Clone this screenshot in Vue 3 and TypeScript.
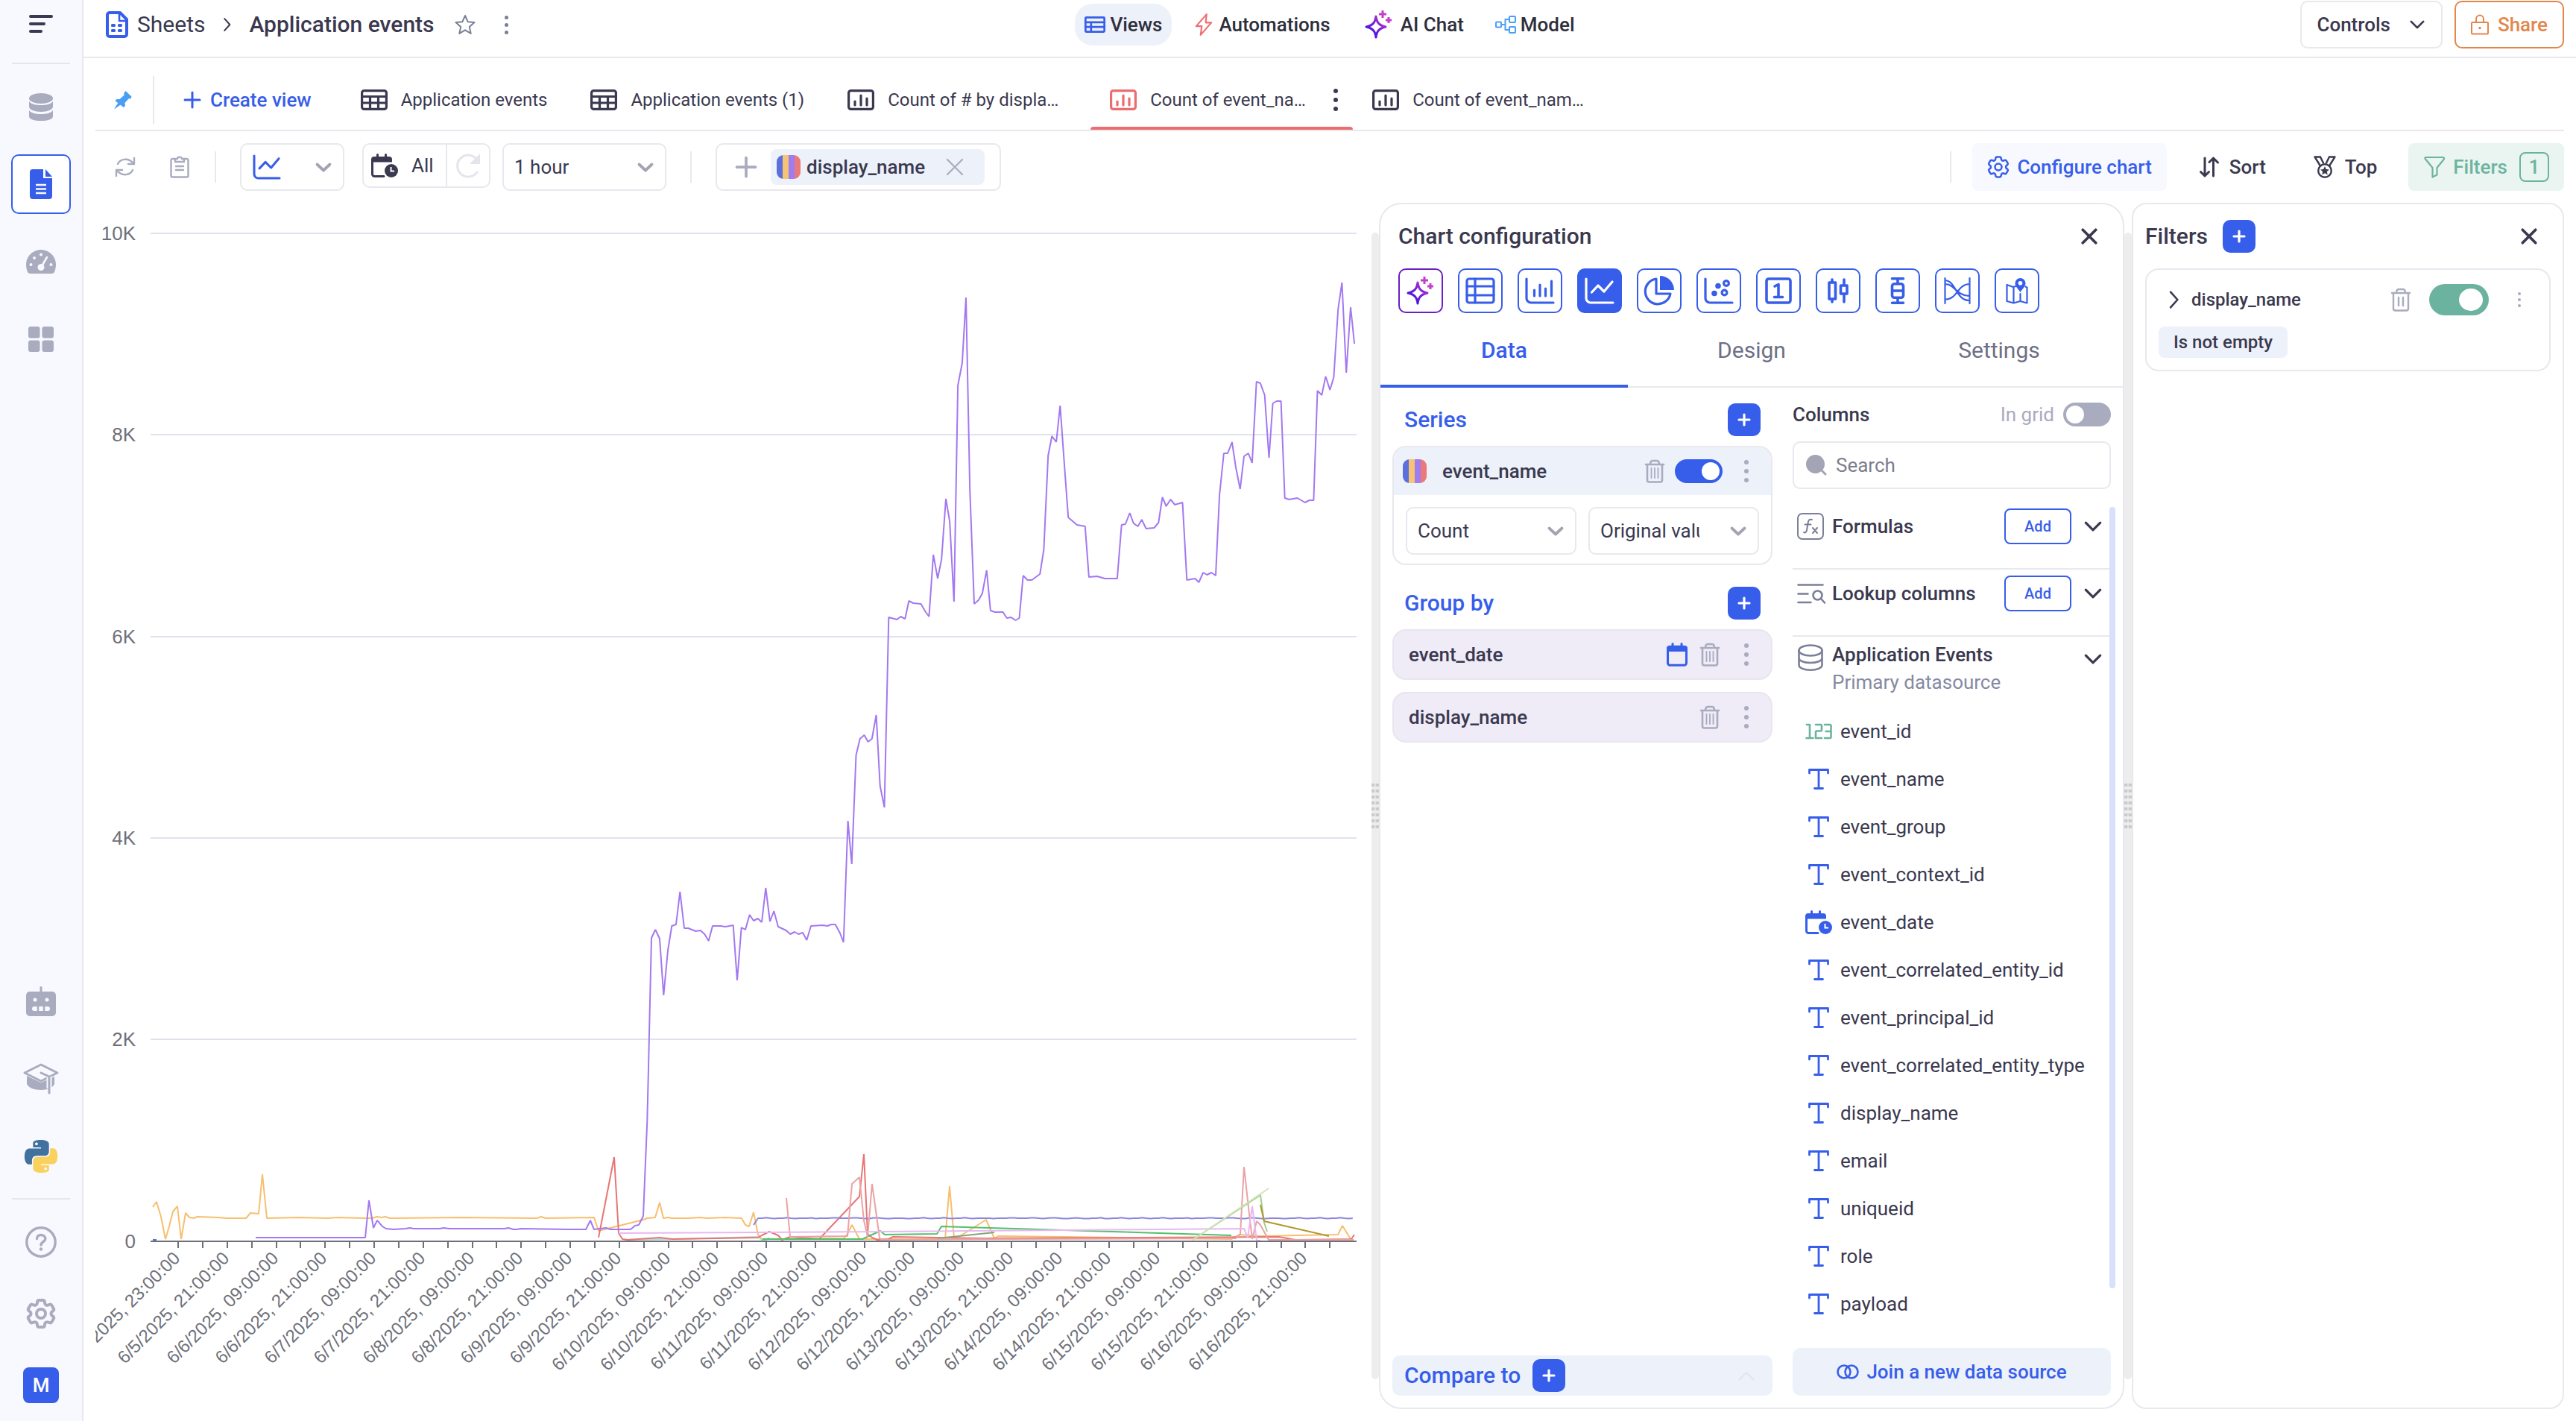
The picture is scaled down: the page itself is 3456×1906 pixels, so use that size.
<script setup lang="ts">
import { h, ref, type FunctionalComponent } from 'vue'

interface Glyph {
  box: string
  body: string
}

const gearPath =
  'M9.594 3.94c.09-.542.56-.94 1.11-.94h2.593c.55 0 1.02.398 1.11.94l.213 1.281c.063.374.313.686.645.87.074.04.147.083.22.127.325.196.72.257 1.075.124l1.217-.456a1.125 1.125 0 0 1 1.37.49l1.296 2.247a1.125 1.125 0 0 1-.26 1.431l-1.003.827c-.293.241-.438.613-.43.992a7.723 7.723 0 0 1 0 .255c-.008.378.137.75.43.991l1.004.827c.424.35.534.955.26 1.43l-1.298 2.247a1.125 1.125 0 0 1-1.369.491l-1.217-.456c-.355-.133-.75-.072-1.076.124a6.47 6.47 0 0 1-.22.128c-.331.183-.581.495-.644.869l-.213 1.281c-.09.543-.56.94-1.11.94h-2.594c-.55 0-1.019-.398-1.11-.94l-.213-1.281c-.062-.374-.312-.686-.644-.87a6.52 6.52 0 0 1-.22-.127c-.325-.196-.72-.257-1.076-.124l-1.217.456a1.125 1.125 0 0 1-1.369-.49l-1.297-2.247a1.125 1.125 0 0 1 .26-1.431l1.004-.827c.292-.24.437-.613.43-.991a6.932 6.932 0 0 1 0-.255c.007-.38-.138-.751-.43-.992l-1.004-.827a1.125 1.125 0 0 1-.26-1.43l1.297-2.247a1.125 1.125 0 0 1 1.37-.491l1.216.456c.356.133.751.072 1.076-.124.072-.044.146-.086.22-.128.332-.183.582-.495.644-.869l.214-1.28Z'

const line = (width: number, inner: string) =>
  `<g fill="none" stroke="currentColor" stroke-width="${width}" stroke-linecap="round" stroke-linejoin="round">${inner}</g>`
const solid = (inner: string) => `<g fill="currentColor">${inner}</g>`

const sparkle =
  '<defs><linearGradient id="ai" x1="0" y1="1" x2="1" y2="0"><stop offset="0.1" stop-color="#3a12e0"/><stop offset="0.6" stop-color="#7d22d8"/><stop offset="1" stop-color="#d63fc4"/></linearGradient></defs><g fill="none" stroke-width="3" stroke-linejoin="round"><path stroke="url(#ai)" d="M15 8c1 8 4 12 13 14-9 2-12 6-13 14-1-8-4-12-13-14 9-2 12-6 13-14z"/><path stroke="#c23fcb" d="M24 0v10M19 5h10M32 9v8M28 13h8"/></g>'

const glyphs: Record<string, Glyph> = {
  menu: { box: '0 0 32 24', body: solid('<rect width="32" height="4" rx="2"/><rect y="10" width="22" height="4" rx="2"/><rect y="20" width="18" height="4" rx="2"/>') },
  db: { box: '0 0 32 37', body: solid('<ellipse cx="16" cy="7" rx="16" ry="7"/><path d="M0 11c3 4 9 5 16 5s13-1 16-5v7c0 4-7 7-16 7S0 22 0 18zM0 23c3 4 9 5 16 5s13-1 16-5v8c0 4-7 6-16 6S0 35 0 31z"/>') },
  doc: { box: '0 0 30 40', body: solid('<path d="M4 0h14v12h12v24a4 4 0 0 1-4 4H4a4 4 0 0 1-4-4V4a4 4 0 0 1 4-4zM21 0l9 10h-9z"/>') + '<path stroke="#f8f9fe" stroke-width="2.6" d="M8 21h14M8 26.500h14M8 32h14"/>' },
  gauge: { box: '0 0 40 32', body: solid('<path d="M20 0C9 0 0 9 0 20c0 4 1 7 2 10 1 1 2 2 4 2h28c2 0 3-1 4-2 1-3 2-6 2-10C40 9 31 0 20 0z"/>') + '<g fill="#f8f9fe"><circle cx="20" cy="6.500" r="2"/><circle cx="11" cy="11" r="2"/><circle cx="6.500" cy="20" r="2"/><circle cx="33.500" cy="20" r="2"/><circle cx="20" cy="23.500" r="4.500"/></g><path stroke="#f8f9fe" stroke-width="2.600" stroke-linecap="round" d="M21 22l7-12"/>' },
  grid: { box: '0 0 34 34', body: solid('<rect width="15.500" height="15.500" rx="3"/><rect x="18.500" width="15.500" height="15.500" rx="3"/><rect y="18.500" width="15.500" height="15.500" rx="3"/><rect x="18.500" y="18.500" width="15.500" height="15.500" rx="3"/>') },
  robot: { box: '0 0 40 40', body: solid('<rect y="7" width="40" height="33" rx="5"/><rect x="18.500" width="3" height="9" rx="1.500"/>') + '<g fill="#f8f9fe"><circle cx="12" cy="18" r="2.500"/><circle cx="28" cy="18" r="2.500"/><rect x="8" y="27" width="24" height="6" rx="3"/></g><path stroke="#a9abbf" stroke-width="2.500" d="M16 26v8M24 26v8"/>' },
  cap: { box: '0 0 48 42', body: solid('<path d="M5 17l19 9 18-8v10c-2 5-9 8-18 8S7 33 5 28z"/>') + '<path fill="#f8f9fe" stroke="#a9abbf" stroke-width="3" stroke-linejoin="round" d="M24 2l22 11-22 11L2 13z"/><path fill="none" stroke="#f8f9fe" stroke-width="7" d="M35 18v16"/>' + line(3, '<path d="M24 13l11 5v22"/>') },
  python: { box: '0 0 24 24', body: '<path fill="#41719f" d="M14.25.18l.9.2.73.26.59.3.45.32.34.34.25.34.16.33.1.3.04.26.02.2-.01.13V8.5l-.05.63-.13.55-.21.46-.26.38-.3.31-.33.25-.35.19-.35.14-.33.1-.3.07-.26.04-.21.02H8.77l-.69.05-.59.14-.5.22-.41.27-.33.32-.27.35-.2.36-.15.37-.1.35-.07.32-.04.27-.02.21v3.06H3.17l-.21-.03-.28-.07-.32-.12-.35-.18-.36-.26-.36-.36-.35-.46-.32-.59-.28-.73-.21-.88-.14-1.05-.05-1.23.06-1.22.16-1.04.24-.87.32-.71.36-.57.4-.44.42-.33.42-.24.4-.16.36-.1.32-.05.24-.01h.16l.06.01h8.16v-.83H6.18l-.01-2.75-.02-.37.05-.34.11-.31.17-.28.25-.26.31-.23.38-.2.44-.18.51-.15.58-.12.64-.1.71-.06.77-.04.84-.02 1.27.05zm-6.3 1.98l-.23.33-.08.41.08.41.23.34.33.22.41.09.41-.09.33-.22.23-.34.08-.41-.08-.41-.23-.33-.33-.22-.41-.09-.41.09z"/><path fill="#f9d15c" d="M21.1 6.11l.28.06.32.12.35.18.36.27.36.35.35.47.32.59.28.73.21.88.14 1.04.05 1.23-.06 1.23-.16 1.04-.24.86-.32.71-.36.57-.4.45-.42.33-.42.24-.4.16-.36.09-.32.05-.24.02-.16-.01h-8.22v.82h5.84l.01 2.76.02.36-.05.34-.11.31-.17.29-.25.25-.31.24-.38.2-.44.17-.51.15-.58.13-.64.09-.71.07-.77.04-.84.01-1.27-.04-1.07-.14-.9-.2-.73-.25-.59-.3-.45-.33-.34-.34-.25-.34-.16-.33-.1-.3-.04-.25-.02-.2.01-.13v-5.34l.05-.64.13-.54.21-.46.26-.38.3-.32.33-.24.35-.2.35-.14.33-.1.3-.06.26-.04.21-.02.13-.01h5.84l.69-.05.59-.14.5-.21.41-.28.33-.32.27-.35.2-.36.15-.36.1-.35.07-.32.04-.28.02-.21V6.07h2.09l.14.01zm-6.47 14.25l-.23.33-.08.41.08.41.23.33.33.23.41.08.41-.08.33-.23.23-.33.08-.41-.08-.41-.23-.33-.33-.23-.41-.08-.41.08z"/>' },
  help: { box: '0 0 42 42', body: line(3.4, '<circle cx="21" cy="21" r="19.200"/><path d="M15.500 16.500c0-3.500 2.500-5 5.500-5s5.800 1.800 5.800 5c0 4.500-5.800 4-5.800 8.500"/>') + solid('<circle cx="21" cy="30.500" r="2.200"/>') },
  gear: { box: '2 2 20 20', body: line(2, `<path d="${gearPath}"/><circle cx="12" cy="12" r="3"/>`) },
  gearThin: { box: '2 2 20 20', body: line(1.7, `<path d="${gearPath}"/><circle cx="12" cy="12" r="3"/>`) },
  sheet: { box: '0 0 30 36', body: line(4, '<path d="M5 2h14l9 9v20a3 3 0 0 1-3 3H5a3 3 0 0 1-3-3V5a3 3 0 0 1 3-3z"/>') + line(2.6, '<path d="M18 3v10h9"/>') + solid('<rect x="7" y="17" width="6" height="4" rx="1.500"/><rect x="16" y="17" width="6" height="4" rx="1.500"/><rect x="7" y="24" width="6" height="4" rx="1.500"/><rect x="16" y="24" width="6" height="4" rx="1.500"/>') },
  right: { box: '0 0 12 22', body: line(2.4, '<path d="M1.500 1.500L10 11l-8.500 9.500"/>') },
  down: { box: '0 0 22 13', body: line(3, '<path d="M2 2l9 9 9-9"/>') },
  arrow: { box: '0 0 22 13', body: line(3.8, '<path d="M2.500 2.500l8.500 8 8.500-8"/>') },
  up: { box: '0 0 22 13', body: line(2.4, '<path d="M1.500 11.500L11 2l9.500 9.500"/>') },
  star: { box: '0 0 28 28', body: line(2, '<path d="M14 2l3.600 8.200 8.900.9-6.700 6 1.900 8.800L14 21.300l-7.700 4.600 1.900-8.800-6.700-6 8.900-.9z"/>') },
  dots: { box: '0 0 6 30', body: solid('<circle cx="3" cy="3" r="3"/><circle cx="3" cy="15" r="3"/><circle cx="3" cy="27" r="3"/>') },
  views: { box: '0 0 27 21', body: line(2.6, '<rect x="1.300" y="1.300" width="24.400" height="18.400" rx="1"/><path d="M1 7.500h25M1 13.500h25M8.500 7.500v12"/>') },
  bolt: { box: '0 0 23 30', body: line(2, '<path d="M15 2L2 17h7L7.500 28 21 12.500h-7z"/>') },
  sparkle: { box: '0 0 38 38', body: sparkle },
  model: { box: '0 0 28 24', body: line(2, '<rect x="1" y="8.500" width="7" height="7" rx="1"/><rect x="19" y="1" width="8" height="8" rx="1"/><rect x="19" y="15" width="8" height="8" rx="1"/><path d="M8 12h5.500M19 5h-5.500v14H19"/>') },
  lock: { box: '0 0 24 28', body: line(2, '<rect x="1" y="11" width="22" height="15.500" rx="1"/><path d="M7 11V6.500a5 5 0 0 1 10 0V11"/>') + solid('<circle cx="12" cy="18.500" r="1.700"/>') },
  pin: { box: '0 0 24 24', body: solid('<path d="M15.500 0l8 7.500-1 2.800-3 .2-5 5.500.5 4-2.200 2L1.500 13.200 3.600 11l4-.1 6-5.400-.3-2.800zM6 15l3.500 3L1 24l-.500-.5z"/>') },
  plus: { box: '0 0 24 24', body: line(3, '<path d="M12 2v20M2 12h20"/>') },
  addPlus: { box: '0 0 20 20', body: line(3.2, '<path d="M10 3v14M3 10h14"/>') },
  table: { box: '0 0 36 28', body: line(3.2, '<rect x="1.600" y="1.600" width="32.800" height="24.800" rx="3"/><path d="M2 9.500h32M2 18h32M12.500 9.500V26M23.500 9.500V26"/>') },
  bars: { box: '0 0 36 28', body: line(3.2, '<rect x="1.600" y="1.600" width="32.800" height="24.800" rx="3"/><path d="M10 16v5M18 8v13M26 12v9"/>') },
  refresh: { box: '0 0 28 28', body: line(2.4, '<path d="M4 10C7 3 18 1 25 9M26 2v8h-8M24 18C21 25 10 27 3 19M2 26v-8h8"/>') },
  clipboard: { box: '0 0 26 30', body: line(2.4, '<path d="M7 4H3.500A2 2 0 0 0 1.500 6v20.500a2 2 0 0 0 2 2h19a2 2 0 0 0 2-2V6a2 2 0 0 0-2-2H19M7 4v4h12V4h-3c0-3-6-3-6 0zM8 14h10M8 19h10"/>') },
  lineChart: { box: '0 0 40 36', body: line(3.2, '<path d="M2 2v26a6 6 0 0 0 6 6h30"/><path d="M9.500 20l8.500-9 8 8 11-13"/>') },
  calClock: { box: '0 0 36 32', body: solid('<path d="M0 8a4 4 0 0 1 4-4h20a4 4 0 0 1 4 4v3.500H0z"/><circle cx="27" cy="23" r="9"/>') + line(3, '<path d="M1.500 9v18.500a3 3 0 0 0 3 3H17M8.500 1.500v4M19.500 1.500v4"/>') + '<path fill="none" stroke="#fff" stroke-width="2" d="M26.500 18v5.500H31"/>' },
  redo: { box: '0 0 36 36', body: line(3, '<path d="M30 27A14.500 14.500 0 1 1 30.500 11"/>') + solid('<path d="M34 2v14H20z"/>') },
  close: { box: '0 0 22 22', body: line(3.4, '<path d="M3 3l16 16M19 3L3 19"/>') },
  cross: { box: '0 0 24 24', body: line(2.2, '<path d="M2 2l20 20M22 2L2 22"/>') },
  sort: { box: '0 0 26 28', body: line(3, '<path d="M7 2v24M1.500 20.500L7 26l5.500-5.500M18.500 26V2M13 7.500L18.500 2 24.500 8"/>') },
  medal: { box: '0 0 30 30', body: line(2.4, '<circle cx="15" cy="20" r="8.800"/><path d="M1.500 1.500l7.500 12M9 1.500l4 8M28.500 1.500l-7.500 12M21 1.500l-4 8M1.500 1.500H9M21 1.500h7.500"/>') + solid('<path d="M15 14l1.800 4 4.200.4-3.200 2.800 1 4.200-3.800-2.200-3.800 2.200 1-4.200L9 18.400l4.200-.4z"/>') },
  funnel: { box: '0 0 30 30', body: line(2.2, '<path d="M3.500 2h23c1.500 0 2 1.500 1 3l-9 11v9.500l-6 3V16l-9-11C2 3.500 2 2 3.500 2z"/>') },
  bigTable: { box: '0 0 40 36', body: line(3.2, '<rect x="2" y="2" width="36" height="32" rx="3"/><path d="M2 12h36M2 24h36M13 2v32"/>') },
  barChart: { box: '0 0 40 36', body: line(3.2, '<path d="M2 2v26a6 6 0 0 0 6 6h30M12.500 17v8M20 10v15M27.500 15v10M35.500 5v20"/>') },
  pie: { box: '0 0 40 40', body: line(3.2, '<path d="M16 4A17 17 0 1 0 35 24H16z"/>') + solid('<path d="M21 0a19 19 0 0 1 19 19H21z"/>') },
  scatter: { box: '0 0 40 36', body: line(3.2, '<path d="M2 2v26a6 6 0 0 0 6 6h30"/><circle cx="30" cy="8" r="3.400"/><circle cx="27.500" cy="20.500" r="3.400"/>') + solid('<circle cx="19" cy="11.500" r="3.800"/><circle cx="14" cy="21.500" r="3.800"/>') },
  number: { box: '0 0 36 36', body: line(3.6, '<rect x="2" y="2" width="32" height="32" rx="3"/><path d="M13 12l5-2.500V26M12.500 26.500h11"/>') },
  candle: { box: '0 0 30 34', body: line(3.6, '<rect x="3" y="6" width="8.500" height="22"/><path d="M7 2v3M7 29v3M23 2v7M23 22v10"/><rect x="18.500" y="10" width="8.500" height="11"/>') },
  box: { box: '0 0 20 36', body: line(3.6, '<path d="M2.500 1.700h15M2.500 34.300h15M10 2v6M10 28v6"/><rect x="2.500" y="8.800" width="15" height="18.500" rx="3"/><path d="M3 18h14"/>') },
  flow: { box: '0 0 36 36', body: line(2.2, '<path d="M1.500 1v34M34.500 1v34M2 4c14 1 14 27 32 27M2 9c12 0 14 15 32 16M2 29.500c16 0 16-20 32-20.500"/>') },
  map: { box: '0 0 30 34', body: line(2.2, '<path d="M13 11l-3 1-8.500-3v22l9 2.500 9-2.500 9 2.500v-21l-2-1M10.500 12v21M19.500 21v9"/>') + solid('<path fill-rule="evenodd" d="M19.500 0a7 7 0 0 1 7 7c0 4.500-4 7-7 12-3-5-7-7.500-7-12a7 7 0 0 1 7-7zm0 4a2.800 2.800 0 1 0 0 5.600 2.800 2.800 0 0 0 0-5.600z"/>') },
  trash: { box: '0 0 28 32', body: line(2.6, '<path d="M2 7h24M8 7c0-3 1-5 3-5h6c2 0 3 2 3 5M4 7v21a2.500 2.500 0 0 0 2.500 2.500h15A2.500 2.500 0 0 0 24 28V7"/>') + line(1.8, '<path d="M9.500 12v13M14 12v13M18.500 12v13"/>') },
  trashTwo: { box: '0 0 28 32', body: line(2.4, '<path d="M2 7h24M8 7c0-3 1-5 3-5h6c2 0 3 2 3 5M4 7v21a2.500 2.500 0 0 0 2.500 2.500h15A2.500 2.500 0 0 0 24 28V7M11 13v11M17 13v11"/>') },
  cal: { box: '0 0 28 32', body: line(3, '<rect x="1.500" y="5.300" width="25" height="25" rx="3"/><path d="M8 1.500v4M20 1.500v4"/>') + solid('<path d="M0 8a4 4 0 0 1 4-4h20a4 4 0 0 1 4 4v4H0z"/>') },
  search: { box: '0 0 28 28', body: solid('<circle cx="12.500" cy="12.500" r="12.500"/>') + line(3, '<path d="M20 20l6 6"/>') },
  fx: { box: '0 0 36 36', body: line(2, '<rect x="1" y="1" width="34" height="34" rx="6"/>') + line(2, '<path d="M20 9c-4-1-5 1-5.500 5L13 23c-.500 3-2 4-4 3M10.500 15.500h8M21 20l6 7M27 20l-6 7"/>') },
  lookup: { box: '0 0 38 27', body: line(2.6, '<path d="M1.500 1.500h33M1.500 13.500h13M1.500 25h17M32 20l5 5.500"/><circle cx="27.500" cy="15.500" r="6"/>') },
  dbLine: { box: '0 0 34 36', body: line(2.6, '<ellipse cx="17" cy="8.500" rx="15.500" ry="7"/><path d="M1.500 8.500v19.500c0 4 7 6.700 15.500 6.700s15.500-2.700 15.500-6.700V8.500M1.500 18.500c0 4 7 6.500 15.500 6.500s15.500-2.500 15.500-6.500"/>') },
  num: { box: '0 0 36 22', body: line(2.6, '<path d="M2 2h4v18M1.500 20h9M14 2h6.500a1.500 1.500 0 0 1 1.500 1.500V9a1.500 1.500 0 0 1-1.500 1.500h-5A1.500 1.500 0 0 0 14 12v8h8M26 2h7a1.500 1.500 0 0 1 1.500 1.500v15A1.500 1.500 0 0 1 33 20h-7M27.500 11H34"/>') },
  text: { box: '0 0 28 28', body: line(2.8, '<path d="M1.500 6V1.500h25V6M14 2v24.500M8.500 26.500h11"/>') },
  join: { box: '0 0 30 20', body: line(2.6, '<circle cx="10" cy="10" r="8.500"/><circle cx="20" cy="10" r="8.500"/>') },
}

const Icon: FunctionalComponent<{ name: string; w: number; h: number }> = (props) =>
  h('svg', {
    viewBox: glyphs[props.name].box,
    width: props.w,
    height: props.h,
    class: 'icon',
    'aria-hidden': 'true',
    innerHTML: glyphs[props.name].body,
  })
Icon.props = ['name', 'w', 'h']

const navItems = [
  { label: 'Views', icon: 'views', w: 28, h: 22, tone: 'blue', active: true },
  { label: 'Automations', icon: 'bolt', w: 28, h: 32, tone: 'red', active: false },
  { label: 'AI Chat', icon: 'sparkle', w: 46, h: 38, tone: 'blue', active: false },
  { label: 'Model', icon: 'model', w: 28, h: 24, tone: 'sky', active: false },
]

const viewTabs = [
  { label: 'Application events', icon: 'table', active: false },
  { label: 'Application events (1)', icon: 'table', active: false },
  { label: 'Count of # by displa…', icon: 'bars', active: false },
  { label: 'Count of event_na…', icon: 'bars', active: true },
  { label: 'Count of event_nam…', icon: 'bars', active: false },
]

const chartTypes = [
  { name: 'AI', icon: 'sparkle', w: 38, h: 38 },
  { name: 'Table', icon: 'bigTable', w: 40, h: 36 },
  { name: 'Bar', icon: 'barChart', w: 40, h: 36 },
  { name: 'Line', icon: 'lineChart', w: 40, h: 36 },
  { name: 'Pie', icon: 'pie', w: 40, h: 40 },
  { name: 'Scatter', icon: 'scatter', w: 40, h: 36 },
  { name: 'Number', icon: 'number', w: 36, h: 36 },
  { name: 'Candlestick', icon: 'candle', w: 30, h: 34 },
  { name: 'Box plot', icon: 'box', w: 20, h: 36 },
  { name: 'Sankey', icon: 'flow', w: 36, h: 36 },
  { name: 'Map', icon: 'map', w: 30, h: 34 },
]

const configTabs = ['Data', 'Design', 'Settings']
const activeType = ref('Line')
const activeTab = ref('Data')
const seriesOn = ref(true)
const inGrid = ref(false)
const filterOn = ref(true)

const groupBy = [
  { name: 'event_date', dated: true },
  { name: 'display_name', dated: false },
]

const columns = [
  { name: 'event_id', kind: 'num' },
  { name: 'event_name', kind: 'text' },
  { name: 'event_group', kind: 'text' },
  { name: 'event_context_id', kind: 'text' },
  { name: 'event_date', kind: 'calClock' },
  { name: 'event_correlated_entity_id', kind: 'text' },
  { name: 'event_principal_id', kind: 'text' },
  { name: 'event_correlated_entity_type', kind: 'text' },
  { name: 'display_name', kind: 'text' },
  { name: 'email', kind: 'text' },
  { name: 'uniqueid', kind: 'text' },
  { name: 'role', kind: 'text' },
  { name: 'payload', kind: 'text' },
]
const kindSize: Record<string, [number, number]> = { num: [36, 22], text: [28, 28], calClock: [36, 32] }

/* Chart geometry, in the units of the drawing's own coordinate space */
const yTicks = ['10K', '8K', '6K', '4K', '2K', '0'].map((label, i) => ({ label, y: 313 + Math.round(i * 270.3) }))
const xTicks = Array.from({ length: 48 }, (_, i) => Math.round(239 + i * 32.88))
const xLabels = xTicks
  .filter((_, i) => i % 2 === 0)
  .map((x, i) => {
    if (i === 0) return { x, label: '6/4/2025, 23:00:00' }
    const day = 5 + Math.floor(i / 2)
    return { x, label: `6/${day}/2025, ${i % 2 ? '21' : '09'}:00:00` }
  })

const wiggle = Array.from({ length: 145 }, (_, i) => {
  const dip = [0, -0.4, 0, 0.4, 0, 0, -0.4, 0.6, 0.4, 0, -0.8, 0, 0][(i * 5 + Math.floor(i / 7)) % 13]
  return `${(1017 + i * 5.54).toFixed(1)},${1634 + dip}`
}).join(' ')

const seriesLines = [
  { color: '#5b70dc', points: '205,1663 210,1663' },
  {
    color: '#f7bf6f',
    points:
      '205,1619 210,1612 216,1632 222,1662 227,1645 232,1625 238,1618 243,1662 249,1627 254,1633 260,1634 265,1632 293,1633 304,1634 330,1634 336,1627 347,1628 352,1575 358,1634 402,1633 439,1634 454,1633 488,1634 499,1634 506,1632 512,1633 517,1632 523,1634 620,1633 720,1634 726,1632 732,1634 797,1633 803,1651 863,1636 868,1634 879,1633 885,1613 890,1634 896,1633 901,1634 923,1634 940,1633 948,1634 973,1633 995,1634 1000,1643 1005,1645 1011,1626 1017,1656 1022,1662 1132,1661 1137,1655 1143,1643 1153,1662 1268,1662 1274,1591 1280,1661 1288,1658 1323,1636 1334,1661 1339,1658 1428,1659 1652,1662 1663,1656 1690,1658 1795,1656 1801,1644 1812,1662 1816,1663',
  },
  { color: '#b0dbd6', points: '842,1663 902,1662 1017,1659 1022,1663 1028,1663 1032,1660' },
  {
    color: '#e87575',
    points:
      '803,1660 824,1552 830,1654 835,1662 842,1663 885,1660 902,1662 1017,1660 1022,1657 1032,1652 1044,1657 1049,1663 1060,1659 1099,1662 1153,1605 1159,1548 1164,1655 1170,1660 1177,1663 1192,1662 1198,1659 1320,1661 1716,1659 1738,1663 1813,1662 1817,1656',
  },
  { color: '#8b86dd', points: '1011,1643 ' + wiggle },
  { color: '#50c16c', points: '1023,1662 1157,1662 1181,1651 1187,1656 1257,1655 1263,1645 1652,1657' },
  { color: '#86a57a', points: '1258,1661 1334,1653' },
  {
    color: '#eaa3a4',
    points:
      '1055,1607 1060,1659 1137,1658 1143,1588 1153,1579 1159,1637 1164,1659 1170,1588 1180,1660 1182,1663 1320,1662 1658,1661 1664,1655 1669,1565 1675,1620 1680,1662 1686,1638 1691,1643 1702,1663 1816,1663',
  },
  { color: '#e9b8f1', points: '830,1654 1180,1652 1669,1648 1674,1660 1680,1618 1686,1664 1691,1664' },
  { color: '#9fd08e', points: '1600,1663 1691,1603 1696,1640 1700,1652' },
  { color: '#d3e3ba', points: '1600,1663 1702,1594' },
  { color: '#b3962c', points: '1691,1616 1696,1638 1783,1658' },
  {
    color: '#a378f0',
    points:
      '343,1660 490,1660 495,1610 501,1647 506,1637 513,1645 518,1648 528,1649 544,1648 550,1647 555,1648 590,1648 595,1647 603,1648 677,1648 682,1647 689,1649 693,1649 699,1648 764,1649 786,1649 792,1637 797,1649 813,1647 819,1649 846,1649 852,1644 857,1643 863,1631 868.3,1503 870,1433 871,1387 874,1258 879.3,1247 885,1259 890.3,1335 896,1275 901.3,1242 907,1240 912.3,1196 918,1245 923.3,1245 933.3,1249 939.7,1248 945.3,1253 950.7,1262 956,1242 966.7,1242 973.3,1243 983.7,1241 989,1315 994.7,1244 1000,1247 1005.7,1227 1011,1235 1016.7,1232 1022,1237 1027.3,1191 1033,1236 1038.3,1222 1044,1243 1054.7,1248 1060.3,1253 1066,1250 1071.3,1253 1077,1251 1082.3,1261 1088,1242 1103.3,1241 1110,1242 1115.3,1240 1120.7,1240 1126.7,1251 1131.7,1264 1137.6,1101 1142.7,1159 1148.5,1013 1153.7,991 1159.5,986 1164.6,995 1169.8,991 1175.6,959 1180.7,1054 1186.5,1083 1192.3,828 1203.3,831 1208.4,827 1214.2,830 1219.4,806 1225.2,809 1235.5,810 1241.3,820 1246.4,827 1252.2,744 1258,776 1263.2,750 1269,669 1274.1,699 1279.9,807 1285.1,517 1290.9,487 1296,399 1301.2,657 1307,810 1312.8,805 1317.9,796 1323.7,765 1328.9,819 1334.7,821 1345.6,821 1350.8,829 1356.6,828 1362.4,832 1367.5,829 1372.7,772 1378.5,778 1384.3,778 1395.2,770 1400.4,737 1406.2,611 1411.3,585 1417.1,593 1422.3,544 1428.1,625 1433.2,694 1444.8,704 1455.8,706 1460.9,774 1471.9,773 1482.2,776 1498.9,776 1504.7,704 1509.9,703 1515.7,688 1520.8,702 1526.6,706 1531.8,697 1537.6,709 1548.5,708 1554.3,701 1559.5,667 1564.6,679 1570.4,670 1576.2,677 1586.5,674 1592.3,778 1603.3,776 1608.4,781 1614.2,768 1619.4,771 1625.2,768 1631,772 1636.1,664 1641.9,608 1647.1,608 1652.9,593 1658,627 1663.8,656 1669,612 1674.8,608 1679.9,621 1685.7,512 1690.9,514 1696.7,530 1702.5,614 1707.6,541 1712.8,538 1718.6,538 1723.7,668 1729.5,670 1740.5,668 1750.8,674 1756.6,671 1762.4,671 1767.5,524 1773.3,530 1778.5,505 1784.3,523 1789.4,506 1795.2,415 1800.4,379 1806.2,500 1812,412 1817.1,461',
  },
]
</script>

<template>
  <div class="app">
    <aside class="sidebar">
      <button class="side-btn menu-btn" aria-label="Menu"><Icon name="menu" :w="32" :h="24" /></button>
      <hr class="side-rule" />
      <nav class="side-nav" aria-label="Main">
        <a href="#data" class="side-link" aria-label="Data"><Icon name="db" :w="32" :h="37" /></a>
        <a href="#sheets" class="side-link current" aria-label="Sheets"><Icon name="doc" :w="30" :h="40" /></a>
        <a href="#dashboards" class="side-link" aria-label="Dashboards"><Icon name="gauge" :w="40" :h="32" /></a>
        <a href="#apps" class="side-link" aria-label="Apps"><Icon name="grid" :w="34" :h="34" /></a>
      </nav>
      <nav class="side-nav bottom" aria-label="Resources">
        <a href="#bot" class="side-link" aria-label="Assistant"><Icon name="robot" :w="40" :h="40" /></a>
        <a href="#learn" class="side-link" aria-label="Academy"><Icon name="cap" :w="48" :h="42" /></a>
        <a href="#python" class="side-link" aria-label="Python"><Icon name="python" :w="44" :h="44" /></a>
      </nav>
      <hr class="side-rule" />
      <nav class="side-nav account" aria-label="Account">
        <a href="#help" class="side-link" aria-label="Help"><Icon name="help" :w="42" :h="42" /></a>
        <a href="#settings" class="side-link" aria-label="Settings"><Icon name="gear" :w="40" :h="40" /></a>
        <button class="avatar">M</button>
      </nav>
    </aside>

    <div class="main">
      <header class="header">
        <div class="crumbs">
          <Icon name="sheet" :w="30" :h="36" class="tone-blue" />
          <a href="#sheets" class="crumb">Sheets</a>
          <Icon name="right" :w="10" :h="20" />
          <h1 class="page-title">Application events</h1>
          <button class="bare star" aria-label="Favourite"><Icon name="star" :w="28" :h="28" /></button>
          <button class="bare star" aria-label="More"><Icon name="dots" :w="5" :h="27" /></button>
        </div>
        <nav class="top-nav" aria-label="Sections">
          <a v-for="item in navItems" :key="item.label" href="#" class="top-link" :class="{ active: item.active }">
            <Icon :name="item.icon" :w="item.w" :h="item.h" :class="'tone-' + item.tone" />
            <span>{{ item.label }}</span>
          </a>
        </nav>
        <div class="header-actions">
          <button class="outline-btn controls">Controls<Icon name="down" :w="20" :h="12" /></button>
          <button class="outline-btn share"><Icon name="lock" :w="24" :h="28" />Share</button>
        </div>
      </header>

      <div class="view-tabs">
        <button class="bare pin" aria-label="Pin"><Icon name="pin" :w="24" :h="24" /></button>
        <span class="tab-rule"></span>
        <button class="bare create"><Icon name="plus" :w="24" :h="24" />Create view</button>
        <a v-for="tab in viewTabs" :key="tab.label" href="#" class="view-tab" :class="{ active: tab.active, wide: tab.icon === 'bars' }">
          <Icon :name="tab.icon" :w="36" :h="28" />
          <span>{{ tab.label }}</span>
          <Icon v-if="tab.active" name="dots" :w="6" :h="30" class="tab-dots" />
        </a>
      </div>

      <div class="toolbar">
        <button class="bare tool-icon" aria-label="Refresh"><Icon name="refresh" :w="28" :h="28" /></button>
        <button class="bare tool-icon" aria-label="Notes"><Icon name="clipboard" :w="26" :h="30" /></button>
        <span class="rule"></span>
        <button class="outline-btn type-btn" aria-label="Chart type">
          <Icon name="lineChart" :w="40" :h="34" class="tone-blue" />
          <Icon name="arrow" :w="22" :h="13" class="tone-grey" />
        </button>
        <div class="date-group">
          <button class="bare all-btn"><Icon name="calClock" :w="36" :h="32" />All</button>
          <button class="bare redo-btn" aria-label="Reset"><Icon name="redo" :w="36" :h="36" /></button>
        </div>
        <span class="select-box hour">
          <select aria-label="Interval"><option>1 hour</option></select>
          <Icon name="arrow" :w="22" :h="13" class="select-arrow" />
        </span>
        <span class="rule second"></span>
        <div class="field-box">
          <button class="bare tool-plus" aria-label="Add field"><Icon name="plus" :w="30" :h="30" /></button>
          <span class="chip">
            <span class="swatch"></span>display_name
            <button class="bare chip-x" aria-label="Remove"><Icon name="cross" :w="24" :h="24" /></button>
          </span>
        </div>
        <div class="tool-right">
          <span class="rule"></span>
          <button class="tool-btn configure"><Icon name="gearThin" :w="30" :h="30" />Configure chart</button>
          <button class="tool-btn sort"><Icon name="sort" :w="26" :h="28" />Sort</button>
          <button class="tool-btn top"><Icon name="medal" :w="30" :h="30" />Top</button>
          <button class="tool-btn filters"><Icon name="funnel" :w="30" :h="30" />Filters<span class="count">1</span></button>
        </div>
      </div>

      <div class="workspace">
        <section class="chart" aria-label="Chart">
          <svg viewBox="128 272 1700 1618" class="plot" role="img" aria-label="Events over time">
            <g v-for="(tick, i) in yTicks" :key="tick.label">
              <line v-if="i < 5" x1="202" x2="1820" :y1="tick.y" :y2="tick.y" stroke="#e0e3ee" stroke-width="2" />
              <text x="182" :y="tick.y + 9" text-anchor="end" class="y-text">{{ tick.label }}</text>
            </g>
            <polyline
              v-for="s in seriesLines"
              :key="s.color"
              :points="s.points"
              :stroke="s.color"
              fill="none"
              stroke-width="2"
              stroke-linejoin="bevel"
            />
            <line x1="202" x2="1820" y1="1665" y2="1665" stroke="#6e7079" stroke-width="2" />
            <line v-for="x in xTicks" :key="x" :x1="x" :x2="x" y1="1665" y2="1674" stroke="#6e7079" stroke-width="2" />
            <text
              v-for="l in xLabels"
              :key="l.label"
              :transform="`translate(${l.x + 4} 1689) rotate(-45)`"
              text-anchor="end"
              class="x-text"
            >{{ l.label }}</text>
          </svg>
        </section>

        <div class="splitter"><span class="grip"></span></div>

        <section class="panel config">
          <div class="panel-head">
            <h2>Chart configuration</h2>
            <button class="bare close" aria-label="Close chart configuration"><Icon name="close" :w="24" :h="24" /></button>
          </div>
          <div class="types">
            <button
              v-for="t in chartTypes"
              :key="t.name"
              class="type"
              :class="{ on: activeType === t.name, ai: t.name === 'AI' }"
              :aria-label="t.name"
              @click="activeType = t.name"
            ><Icon :name="t.icon" :w="t.w" :h="t.h" /></button>
          </div>
          <div class="config-tabs" role="tablist">
            <button
              v-for="t in configTabs"
              :key="t"
              role="tab"
              class="config-tab"
              :class="{ on: activeTab === t }"
              @click="activeTab = t"
            >{{ t }}</button>
          </div>
          <div class="config-body">
            <div class="left-col">
              <div class="group-head">
                <h3>Series</h3>
                <button class="add" aria-label="Add series"><Icon name="addPlus" :w="20" :h="20" /></button>
              </div>
              <div class="series-card">
                <div class="series-head">
                  <span class="swatch"></span>
                  <span class="row-name">event_name</span>
                  <button class="bare" aria-label="Delete series"><Icon name="trash" :w="28" :h="32" /></button>
                  <input v-model="seriesOn" type="checkbox" class="toggle" aria-label="Series enabled" />
                  <button class="bare row-dots" aria-label="Series menu"><Icon name="dots" :w="6" :h="30" /></button>
                </div>
                <div class="series-selects">
                  <span class="select-box">
                    <select aria-label="Aggregation"><option>Count</option></select>
                    <Icon name="arrow" :w="22" :h="13" class="select-arrow" />
                  </span>
                  <span class="select-box">
                    <select aria-label="Value mode"><option>Original value</option></select>
                    <Icon name="arrow" :w="22" :h="13" class="select-arrow" />
                  </span>
                </div>
              </div>
              <div class="group-head second">
                <h3>Group by</h3>
                <button class="add" aria-label="Add group"><Icon name="addPlus" :w="20" :h="20" /></button>
              </div>
              <div v-for="g in groupBy" :key="g.name" class="group-row">
                <span class="row-name">{{ g.name }}</span>
                <button v-if="g.dated" class="bare tone-blue" aria-label="Date options"><Icon name="cal" :w="28" :h="32" /></button>
                <button class="bare" aria-label="Delete group"><Icon name="trash" :w="28" :h="32" /></button>
                <button class="bare row-dots" aria-label="Group menu"><Icon name="dots" :w="6" :h="30" /></button>
              </div>
              <div class="compare">
                <h3>Compare to</h3>
                <button class="add" aria-label="Add comparison"><Icon name="addPlus" :w="20" :h="20" /></button>
                <Icon name="up" :w="22" :h="13" class="compare-up" />
              </div>
            </div>

            <div class="right-col">
              <div class="columns-head">
                <h4>Columns</h4>
                <label class="in-grid">In grid<input v-model="inGrid" type="checkbox" class="toggle" /></label>
              </div>
              <label class="search">
                <Icon name="search" :w="28" :h="28" />
                <input type="search" placeholder="Search" aria-label="Search columns" />
              </label>
              <div class="column-scroll">
                <div class="tool-row">
                  <Icon name="fx" :w="36" :h="36" />
                  <h4>Formulas</h4>
                  <button class="mini">Add</button>
                  <button class="bare fold" aria-label="Expand formulas"><Icon name="down" :w="24" :h="14" /></button>
                </div>
                <div class="tool-row lookup">
                  <Icon name="lookup" :w="38" :h="27" />
                  <h4>Lookup columns</h4>
                  <button class="mini">Add</button>
                  <button class="bare fold" aria-label="Expand lookup columns"><Icon name="down" :w="24" :h="14" /></button>
                </div>
                <div class="source">
                  <Icon name="dbLine" :w="34" :h="36" />
                  <div class="source-text">
                    <h4>Application Events</h4>
                    <p>Primary datasource</p>
                  </div>
                  <button class="bare fold" aria-label="Collapse data source"><Icon name="down" :w="24" :h="14" /></button>
                </div>
                <ul class="column-list">
                  <li v-for="c in columns" :key="c.name">
                    <span class="kind" :class="c.kind"><Icon :name="c.kind" :w="kindSize[c.kind][0]" :h="kindSize[c.kind][1]" /></span>
                    {{ c.name }}
                  </li>
                </ul>
                <span class="scroll-thumb"></span>
              </div>
              <button class="join"><Icon name="join" :w="30" :h="20" />Join a new data source</button>
            </div>
          </div>
        </section>

        <div class="splitter"><span class="grip"></span></div>

        <section class="panel filter-panel">
          <div class="panel-head">
            <h2>Filters</h2>
            <button class="add" aria-label="Add filter"><Icon name="addPlus" :w="20" :h="20" /></button>
            <button class="bare close" aria-label="Close filters"><Icon name="close" :w="24" :h="24" /></button>
          </div>
          <div class="filter-card">
            <div class="filter-row">
              <button class="bare expand" aria-label="Expand filter"><Icon name="right" :w="14" :h="24" /></button>
              <span class="filter-name">display_name</span>
              <button class="bare" aria-label="Delete filter"><Icon name="trashTwo" :w="28" :h="32" /></button>
              <input v-model="filterOn" type="checkbox" class="toggle green" aria-label="Filter enabled" />
              <button class="bare filter-dots" aria-label="Filter menu"><Icon name="dots" :w="4" :h="24" /></button>
            </div>
            <span class="condition">Is not empty</span>
          </div>
        </section>
      </div>
    </div>
  </div>
</template>

<style>
body {
  background: #fff;
}
</style>

<style scoped>
.app {
  display: flex;
  min-height: 100vh;
  font-family: Roboto, "Liberation Sans", sans-serif;
  font-size: 26px;
  line-height: 32px;
  color: #3a394f;
  background: #fff;
}
.app * {
  box-sizing: border-box;
}
h1, h2, h3, h4, p, ul {
  margin: 0;
  padding: 0;
  list-style: none;
}
h2, h3 {
  font-size: 30px;
  font-weight: 500;
}
h4 {
  font-size: 26px;
  font-weight: 500;
}
a {
  color: inherit;
  text-decoration: none;
}
button, select, input {
  font: inherit;
  color: inherit;
  margin: 0;
}
button {
  cursor: pointer;
}
.icon {
  display: block;
  flex: none;
  overflow: visible;
}
.bare {
  display: flex;
  align-items: center;
  padding: 0;
  border: 0;
  background: none;
}
.tone-blue { color: #375eea; }
.tone-red { color: #f06d6f; }
.tone-sky { color: #4a9ff5; }
.tone-grey { color: #a3a4b2; }

/* Sidebar */
.sidebar {
  display: flex;
  flex-direction: column;
  align-items: center;
  flex: none;
  width: 112px;
  padding-bottom: 24px;
  background: #f8f9fe;
  border-right: 2px solid #e8e8ee;
  color: #a9abbf;
}
.side-btn {
  display: flex;
  align-items: center;
  justify-content: center;
  width: 80px;
  height: 64px;
  padding: 0;
  border: 0;
  background: none;
}
.menu-btn {
  color: #3a394f;
  margin-bottom: 20px;
}
.side-rule {
  width: 78px;
  height: 2px;
  margin: 0;
  border: 0;
  background: #e5e6ec;
}
.side-nav {
  display: flex;
  flex-direction: column;
  align-items: center;
  gap: 24px;
  margin-top: 17px;
}
.side-link {
  display: flex;
  align-items: center;
  justify-content: center;
  width: 80px;
  height: 80px;
}
.side-link.current {
  color: #375eea;
  border: 2px solid #375eea;
  border-radius: 10px;
  background: #fff;
}
.side-nav.bottom {
  margin-top: auto;
  margin-bottom: 16px;
}
.side-nav.account {
  gap: 16px;
}
.avatar {
  width: 48px;
  height: 48px;
  margin-top: 16px;
  padding: 0;
  border: 0;
  border-radius: 8px;
  background: #375eea;
  color: #fff;
  font-weight: 500;
}

/* Header */
.main {
  display: flex;
  flex-direction: column;
  flex: 1;
  min-width: 0;
}
.header {
  display: grid;
  grid-template-columns: 1fr auto 1fr;
  align-items: center;
  height: 78px;
  padding: 0 16px 10px;
  border-bottom: 2px solid #e8e8ee;
}
.crumbs {
  display: flex;
  align-items: center;
  padding-left: 14px;
  font-size: 30px;
}
.crumb {
  margin: 0 25px 0 12px;
}
.page-title {
  margin: 0 27px 0 24px;
  font-size: 30px;
  font-weight: 500;
}
.star {
  color: #7b7f97;
  margin-right: 39px;
}
.top-nav {
  display: flex;
  gap: 16px;
  font-weight: 500;
  color: #2f2f3c;
}
.top-link {
  display: flex;
  align-items: center;
  gap: 6px;
  height: 56px;
  padding: 0 13px;
  border-radius: 24px;
}
.top-link.active {
  background: #edf1fa;
}
.header-actions {
  display: flex;
  justify-content: flex-end;
  gap: 16px;
}
.outline-btn {
  display: flex;
  align-items: center;
  height: 64px;
  border: 2px solid #e8e8ee;
  border-radius: 10px;
  background: #fff;
  font-weight: 500;
}
.controls {
  gap: 26px;
  padding: 0 22px 0 20px;
}
.share {
  gap: 12px;
  padding: 0 20px;
  border-color: #e2874c;
  color: #e2874c;
}

/* View tabs */
.view-tabs {
  display: flex;
  align-items: center;
  height: 98px;
  margin: 0 16px;
  padding-top: 16px;
  border-bottom: 2px solid #e8e8ee;
  font-size: 24px;
}
.pin {
  margin: 0 28px 0 25px;
  color: #4a9ff5;
}
.tab-rule {
  width: 2px;
  height: 64px;
  background: #e8e8ee;
}
.create {
  gap: 12px;
  margin: 0 40px 0 39px;
  color: #375eea;
  font-size: 26px;
  font-weight: 500;
}
.view-tab {
  display: flex;
  align-items: center;
  gap: 18px;
  height: 80px;
  padding: 0 32px 0 26px;
  white-space: nowrap;
}
.view-tab.wide {
  width: 352px;
  padding-right: 20px;
}
.view-tab.active {
  position: relative;
}
.view-tab.active::after {
  content: "";
  position: absolute;
  left: 0;
  right: 0;
  bottom: 0;
  height: 4px;
  border-radius: 4px 4px 0 0;
  background: #ed6c6f;
}
.view-tab.active > .icon:first-child {
  color: #ed6c6f;
}
.tab-dots {
  margin-left: auto;
}

/* Toolbar */
.toolbar {
  display: flex;
  align-items: center;
  height: 64px;
  margin: 16px;
}
.tool-icon {
  color: #a9abbf;
  margin-left: 26px;
}
.tool-icon + .tool-icon {
  margin-left: 46px;
}
.rule {
  width: 2px;
  height: 42px;
  margin: 0 32px 0 34px;
  background: #e8e8ee;
}
.rule.second {
  margin: 0 32px;
}
.type-btn {
  justify-content: space-between;
  width: 140px;
  padding: 0 15px 0 14px;
}
.date-group {
  display: flex;
  align-self: flex-start;
  height: 60px;
  margin: 0 16px 0 24px;
  border: 2px solid #e8e8ee;
  border-radius: 10px;
}
.all-btn {
  gap: 18px;
  width: 110px;
  padding-left: 10px;
}
.redo-btn {
  width: 58px;
  justify-content: center;
  border-left: 2px solid #e8e8ee;
  color: #e4e5ea;
}
.select-box {
  position: relative;
  display: flex;
  min-width: 0;
}
.select-box select {
  width: 100%;
  height: 64px;
  padding: 0 78px 0 14px;
  border: 2px solid #e8e8ee;
  border-radius: 10px;
  background: #fff;
  appearance: none;
}
.select-arrow {
  position: absolute;
  right: 17px;
  top: 26px;
  color: #a3a4b2;
  pointer-events: none;
}
.hour {
  width: 220px;
}
.field-box {
  display: flex;
  align-items: center;
  height: 64px;
  padding: 0 20px 0 24px;
  border: 2px solid #e8e8ee;
  border-radius: 10px;
}
.tool-plus {
  margin-right: 18px;
  color: #a9abbf;
}
.chip {
  display: flex;
  align-items: center;
  gap: 8px;
  height: 48px;
  padding: 0 28px 0 8px;
  border-radius: 8px;
  background: #edf1fa;
  font-weight: 500;
}
.swatch {
  width: 32px;
  height: 32px;
  border-radius: 9px;
  background: linear-gradient(90deg, #5b70dc 25%, #f7c374 25% 50%, #9f7df0 50% 75%, #ea797b 75%);
}
.chip-x {
  margin-left: 20px;
  color: #a9abbf;
}
.tool-right {
  display: flex;
  align-items: center;
  margin-left: auto;
}
.tool-right .rule {
  margin: 0 28px;
}
.tool-btn {
  display: flex;
  align-items: center;
  gap: 10px;
  height: 64px;
  padding: 0 20px;
  border: 0;
  border-radius: 8px;
  background: none;
  font-weight: 500;
}
.configure {
  color: #375eea;
  background: #f8f9fe;
}
.sort {
  gap: 14px;
  margin: 0 24px;
}
.top {
  gap: 12px;
  margin-right: 22px;
}
.filters {
  background: #eaf5f1;
  color: #6cb39f;
}
.count {
  width: 40px;
  height: 40px;
  margin-left: 6px;
  border: 2px solid #6cb39f;
  border-radius: 8px;
  line-height: 36px;
}

/* Workspace */
.workspace {
  display: flex;
  flex: 1;
  padding: 0 16px;
  margin-bottom: 16px;
}
.chart {
  flex: 1;
  min-width: 0;
  padding-right: 12px;
}
.plot {
  display: block;
  width: 100%;
  height: auto;
}
.y-text {
  font: 26px "Liberation Sans", Arial, sans-serif;
  fill: #6e7079;
}
.x-text {
  font: 24px "Liberation Sans", Arial, sans-serif;
  fill: #6e7079;
}
.splitter {
  display: flex;
  align-items: center;
  flex: none;
  width: 10px;
  margin: 40px 0;
  border-radius: 5px;
  background: #ededed;
}
.grip {
  width: 10px;
  height: 60px;
  background: repeating-linear-gradient(180deg, transparent 0 4px, #ededed 4px 8px), linear-gradient(90deg, #cbcbcb 4px, #e0e0e0 4px 6px, #cbcbcb 6px);
}
.panel {
  flex: none;
  border: 2px solid #e8e8ee;
  border-radius: 30px;
}
.panel-head {
  display: flex;
  align-items: center;
  height: 86px;
}
.close {
  margin-left: auto;
}
.config {
  display: flex;
  flex-direction: column;
  width: 1000px;
}
.config .panel-head {
  padding: 0 33px 0 24px;
}
.types {
  display: flex;
  gap: 20px;
  padding: 0 24px;
}
.type {
  display: flex;
  align-items: center;
  justify-content: center;
  width: 60px;
  height: 60px;
  padding: 0;
  border: 2px solid #375eea;
  border-radius: 10px;
  background: #fff;
  color: #375eea;
}
.type.on {
  background: #375eea;
  color: #fff;
}
.type.ai {
  border-color: #6a1fc4;
}
.config-tabs {
  display: flex;
  height: 100px;
  border-bottom: 2px solid #e8e8ee;
}
.config-tab {
  flex: 1;
  height: 100px;
  padding: 4px 0 0;
  border: 0;
  border-bottom: 4px solid transparent;
  background: none;
  font-size: 30px;
  color: #6f6f85;
}
.config-tab.on {
  border-color: #375eea;
  color: #375eea;
  font-weight: 500;
}
.config-body {
  display: flex;
  flex: 1;
  gap: 27px;
  padding: 16px;
}
.left-col {
  display: flex;
  flex-direction: column;
  width: 510px;
}
.group-head {
  display: flex;
  align-items: center;
  justify-content: space-between;
  height: 44px;
  margin: 5px 16px 13px;
  color: #375eea;
}
.group-head.second {
  margin-top: 29px;
}
.add {
  display: flex;
  align-items: center;
  justify-content: center;
  width: 44px;
  height: 44px;
  padding: 0;
  border: 0;
  border-radius: 10px;
  background: #375eea;
  color: #fff;
}
.series-card {
  border: 2px solid #e8e8ee;
  border-radius: 18px;
  overflow: hidden;
}
.series-head {
  display: flex;
  align-items: center;
  gap: 13px;
  height: 64px;
  padding: 0 30px 0 12px;
  background: #edf1fa;
}
.row-name {
  flex: 1;
  font-weight: 500;
}
.series-head .row-name {
  margin-left: 8px;
}
.series-head .bare,
.group-row .bare:not(.tone-blue) {
  color: #a9abbf;
}
.row-dots {
  margin-left: 16px;
}
.toggle {
  position: relative;
  flex: none;
  width: 64px;
  height: 32px;
  border-radius: 16px;
  background: #a9abbf;
  appearance: none;
}
.toggle:checked {
  background: #375eea;
}
.toggle::before {
  content: "";
  position: absolute;
  left: 4px;
  top: 4px;
  width: 24px;
  height: 24px;
  border-radius: 50%;
  background: #fff;
}
.toggle:checked::before {
  left: 36px;
}
.toggle.green {
  width: 80px;
  height: 42px;
  border-radius: 21px;
  background: #6cb39f;
}
.toggle.green::before {
  left: 40px;
  top: 6px;
  width: 32px;
  height: 30px;
}
.series-selects {
  display: flex;
  gap: 16px;
  padding: 16px 16px 12px;
}
.series-selects .select-box {
  flex: 1;
}
.group-row {
  display: flex;
  align-items: center;
  gap: 16px;
  height: 68px;
  margin-bottom: 16px;
  padding: 0 30px 0 20px;
  border: 2px solid #e8e6ee;
  border-radius: 18px;
  background: #efebf7;
}
.compare {
  display: flex;
  align-items: center;
  gap: 16px;
  height: 54px;
  margin-top: auto;
  padding: 0 24px 0 16px;
  border-radius: 10px;
  background: #edf1fa;
  color: #375eea;
}
.compare-up {
  margin-left: auto;
  color: #e5e6ec;
}
.right-col {
  display: flex;
  flex-direction: column;
  flex: 1;
}
.columns-head {
  display: flex;
  align-items: center;
  justify-content: space-between;
  height: 40px;
}
.in-grid {
  display: flex;
  align-items: center;
  gap: 12px;
  color: #a9abbf;
}
.search {
  display: flex;
  align-items: center;
  gap: 12px;
  height: 64px;
  margin: 16px 0;
  padding: 0 16px;
  border: 2px solid #e8e8ee;
  border-radius: 10px;
  color: #a3a4b4;
}
.search input {
  flex: 1;
  min-width: 0;
  padding: 0;
  border: 0;
  outline: 0;
  background: none;
  color: #3a394f;
}
.search input::placeholder {
  color: #7c7d8d;
  opacity: 1;
}
.column-scroll {
  position: relative;
  padding-top: 2px;
}
.scroll-thumb {
  position: absolute;
  top: 8px;
  right: -6px;
  width: 8px;
  height: 1048px;
  border-radius: 4px;
  background: #d8e0fb;
}
.tool-row {
  display: flex;
  align-items: flex-start;
  height: 90px;
  padding: 8px 12px 0 6px;
  border-bottom: 2px solid #e8e8ee;
}
.tool-row > .icon {
  margin-top: 6px;
  color: #7b7f97;
}
.tool-row.lookup > .icon {
  margin-top: 11px;
}
.tool-row h4 {
  flex: 1;
  margin: 8px 0 0 11px;
}
.tool-row.lookup h4 {
  margin-left: 9px;
}
.mini {
  width: 90px;
  height: 48px;
  margin-right: 17px;
  padding: 0;
  border: 2px solid #375eea;
  border-radius: 8px;
  background: #fff;
  color: #375eea;
  font-size: 20px;
  font-weight: 500;
}
.fold {
  height: 48px;
}
.source {
  display: flex;
  align-items: flex-start;
  height: 95px;
  padding: 8px 12px 0 7px;
}
.source > .icon {
  margin-top: 2px;
  color: #7b7f97;
}
.source .fold {
  height: 44px;
}
.source-text {
  flex: 1;
  margin-left: 12px;
  margin-top: -2px;
  line-height: 38px;
}
.source-text h4 {
  line-height: 36px;
}
.source-text p {
  color: #868aa1;
}
.column-list li {
  display: flex;
  align-items: center;
  gap: 11px;
  height: 64px;
  padding-left: 16px;
}
.kind {
  display: flex;
  justify-content: center;
  width: 37px;
  color: #375eea;
}
.kind.num {
  color: #6cb39f;
}
.join {
  display: flex;
  align-items: center;
  justify-content: center;
  gap: 10px;
  height: 64px;
  margin-top: auto;
  padding: 0;
  border: 0;
  border-radius: 10px;
  background: #edf1fa;
  color: #375eea;
  font-weight: 500;
}

/* Filters */
.filter-panel {
  width: 580px;
  padding: 0 16px;
  border-radius: 20px;
}
.filter-panel .add {
  margin-left: 20px;
}
.filter-panel .close {
  margin-right: 17px;
}
.filter-card {
  height: 138px;
  padding: 18px 16px;
  border: 2px solid #e8e8ee;
  border-radius: 18px;
}
.filter-row {
  display: flex;
  align-items: center;
  height: 44px;
  margin-bottom: 14px;
  font-size: 24px;
}
.expand {
  margin: 0 16px 0 14px;
}
.filter-name {
  flex: 1;
  font-weight: 500;
}
.filter-row .bare:not(.expand) {
  color: #a9abbf;
}
.toggle.green {
  margin: 0 39px 0 24px;
}
.filter-dots {
  margin-right: 22px;
}
.condition {
  display: inline-block;
  height: 42px;
  padding: 0 20px;
  border-radius: 8px;
  background: #edf1fa;
  font-size: 24px;
  font-weight: 500;
  line-height: 42px;
}
</style>
